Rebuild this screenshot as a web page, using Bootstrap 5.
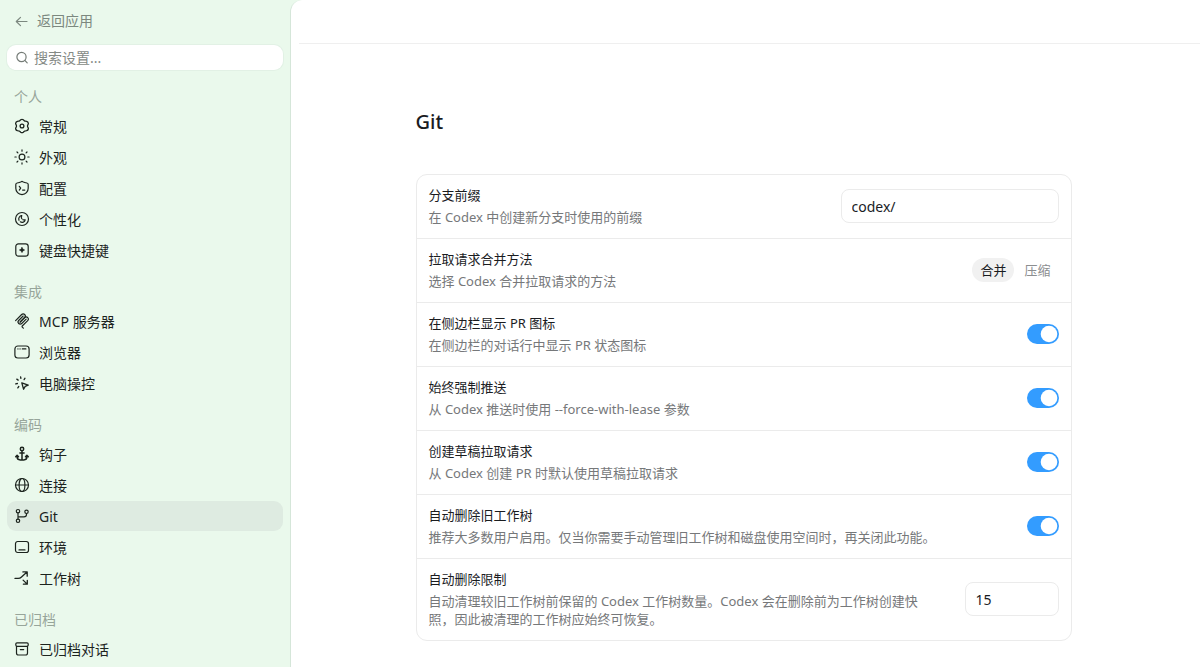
<!DOCTYPE html>
<html lang="zh-CN">
<head>
<meta charset="utf-8">
<meta name="viewport" content="width=device-width, initial-scale=1">
<title>设置 - Git</title>
<link href="https://cdn.jsdelivr.net/npm/bootstrap@5.3.0/dist/css/bootstrap.min.css" rel="stylesheet">
<style>
  :root {
    --ink: #1a1c1f;
    --muted: #76787a;
    --line: #ebebeb;
    --side: #eaf9ec;
  }
  body {
    background: var(--side);
    color: var(--ink);
    font-family: "Noto Sans", "Noto Sans CJK SC", sans-serif;
    font-size: 14px;
  }
  .sidebar { flex: 0 0 290px; padding: 9px 7px 0; }
  .back-link { color: #7c887f; line-height: 24px; padding: 0 8px; gap: 8px; }
  .search-box { background: #fff; border-radius: 9px; height: 25px; margin-top: 12px; padding: 0 8px; gap: 5px; color: #747b76; box-shadow: 0 0 0 1px #e2f1e5; }
  .search-box input { font-size: 14px; line-height: 20px; color: var(--ink); }
  .search-box input::placeholder { color: #858a86; opacity: 1; }
  .group-title { color: #97a59a; font-size: 14px; font-weight: 400; line-height: 22px; margin: 16px 0 3px; padding: 0 7px; }
  .side-link { color: #1c241e; height: 30px; padding: 0 7px; gap: 9px; border-radius: 9px; }
  .side-link:hover, .side-link.active { background: #deebe1; }
  .side-list { gap: 1px; }
  .side-list svg, .back-link svg, .search-box svg { flex: none; fill: none; stroke: currentColor; stroke-linecap: round; stroke-linejoin: round; }
  .panel { background: #fff; border-left: 1px solid #d5e6d9; border-top-left-radius: 12px; }
  .topbar { height: 44px; border-bottom: 1px solid #efefef; margin-left: 8px; }
  .content-col { max-width: 656px; padding: 66px 0 24px; }
  .page-title { font-size: 20px; line-height: 24px; font-weight: 500; margin-bottom: 40px; }
  .settings-card { border: 1px solid var(--line); border-radius: 11px; }
  .setting { padding: 11px 12px 12px; gap: 24px; }
  .setting + .setting { border-top: 1px solid var(--line); }
  .setting-name { display: block; font-size: 13px; line-height: 18px; font-weight: 400; }
  .setting-help { font-size: 13px; line-height: 18px; color: var(--muted); margin: 4px 0 0; font-variant-ligatures: none; }
  .help-narrow { max-width: 492px; }
  .field { height: 34px; border-color: var(--line); border-radius: 8px; font-size: 14px; color: var(--ink); padding: 0 10px; }
  .field-prefix { width: 218px; }
  .field-limit { width: 94px; }
  .seg { font-size: 13px; line-height: 24px; padding: 0 8px; border: 0; border-radius: 12px; background: none; color: #8c8e90; }
  .seg.active { background: #f1f1f1; color: var(--ink); }
  .seg-group { gap: 2px; }
  .form-switch .toggle, .form-switch .toggle:checked { --bs-form-switch-bg: url("data:image/svg+xml,%3Csvg xmlns='http://www.w3.org/2000/svg' viewBox='0 0 20 20'%3E%3Ccircle cx='10' cy='10' r='8.3' fill='white'/%3E%3C/svg%3E"); background-image: var(--bs-form-switch-bg); }
  .form-switch .toggle { width: 32px; height: 20px; margin: 0; border: 0; background-size: 20px 20px; }
  .form-switch .toggle:checked { background-color: #339cff; }
</style>
</head>
<body>
<div class="d-flex min-vh-100">
  <aside class="sidebar">
    <a href="#" class="back-link d-flex align-items-center text-decoration-none">
      <svg width="14" height="14" viewBox="0 0 14 14" stroke-width="1.2"><path d="M12 7.500H1.500M5.500 3.300 1.300 7.500l4.200 4.200"/></svg>返回应用
    </a>
    <label class="search-box d-flex align-items-center">
      <svg width="14" height="14" viewBox="0 0 14 14" stroke-width="1.2"><circle cx="6.500" cy="6" r="4.600"/><path d="m9.800 9.400 2.400 2.500"/></svg>
      <input type="search" class="flex-grow-1 border-0 bg-transparent p-0" placeholder="搜索设置..." aria-label="搜索设置">
    </label>

    <h2 class="group-title">个人</h2>
    <nav class="side-list d-flex flex-column">
      <a href="#" class="side-link d-flex align-items-center text-decoration-none">
        <svg width="16" height="16" viewBox="0 0 16 16" stroke-width="1.300"><path d="M6.700 1.800Q8 .9 9.300 1.800l1 .9q.5.500 1.200.5l1.100.1q1.400.4 1.700 1.700.2.700-.2 1.300-.6.900-.6 1.700t.6 1.700q.4.600.2 1.300-.3 1.300-1.700 1.700l-1.100.1q-.7 0-1.200.5l-1 .9q-1.300.9-2.600 0l-1-.9q-.5-.5-1.200-.5l-1.100-.1Q2 12.300 1.700 11q-.2-.7.200-1.300.6-.9.6-1.700t-.6-1.700Q1.500 5.700 1.700 5 2 3.700 3.400 3.300l1.100-.1q.7 0 1.200-.5z"/><circle cx="8" cy="8" r="1.900"/></svg>常规
      </a>
      <a href="#" class="side-link d-flex align-items-center text-decoration-none">
        <svg width="16" height="16" viewBox="0 0 16 16" stroke-width="1.200"><circle cx="8" cy="8" r="2.900"/><path d="M8 .9v1.300M8 13.800v1.300M.9 8h1.300M13.800 8h1.300M3 3l.9.9M12.100 12.100l.9.9M3 13l.9-.9M12.100 3.900l.9-.9"/></svg>外观
      </a>
      <a href="#" class="side-link d-flex align-items-center text-decoration-none">
        <svg width="16" height="16" viewBox="0 0 16 16" stroke-width="1.200"><path d="M7.200 1.700q.8-.5 1.600 0c1.200.7 2.600 1.100 4.100 1.300q1.300.2 1.300 1.400v3.800c0 3.400-2.600 6.200-6.200 6.500-3.600-.3-6.200-3.100-6.200-6.500V4.400Q1.800 3.200 3.100 3C4.600 2.800 6 2.400 7.200 1.700z"/><path d="m5.300 6.300 1.400 1.900-1.400 1.900M8.600 10.100h2.200"/></svg>配置
      </a>
      <a href="#" class="side-link d-flex align-items-center text-decoration-none">
        <svg width="16" height="16" viewBox="0 0 16 16" stroke-width="1.200"><circle cx="8" cy="8" r="6.500"/><path d="M7.800 4.700A3.300 3.300 0 0 0 5 9.300M6.300 10.800a3.200 3.200 0 0 0 4.900-2M7.800 4.700c-.7 1.200-.6 2.200 0 3M8.900 8.700c.7.300 1.500.3 2.300.1"/></svg>个性化
      </a>
      <a href="#" class="side-link d-flex align-items-center text-decoration-none">
        <svg width="16" height="16" viewBox="0 0 16 16" stroke-width="1.200"><rect x="1.800" y="1.800" width="12.400" height="12.400" rx="2.600"/><path fill="currentColor" stroke-width=".6" d="M8 5.400 8.900 7.100 10.600 8 8.900 8.900 8 10.600 7.100 8.900 5.400 8l1.700-.9z"/></svg>键盘快捷键
      </a>
    </nav>

    <h2 class="group-title">集成</h2>
    <nav class="side-list d-flex flex-column">
      <a href="#" class="side-link d-flex align-items-center text-decoration-none">
        <svg width="16" height="16" viewBox="0 0 180 180" stroke-width="13"><path d="M18 84.850 85.880 16.970c9.370-9.370 24.570-9.370 33.940 0s9.370 24.570 0 33.940L68.560 102.180"/><path d="m69.270 101.470 50.550-50.560c9.380-9.370 24.570-9.370 33.950 0l.35.360c9.370 9.370 9.370 24.570 0 33.940L92.720 146.600c-3.120 3.120-3.120 8.190 0 11.310l12.610 12.610"/><path d="m102.850 33.940-50.200 50.210c-9.370 9.370-9.370 24.560 0 33.940 9.370 9.370 24.570 9.370 33.940 0l50.200-50.210"/></svg>MCP 服务器
      </a>
      <a href="#" class="side-link d-flex align-items-center text-decoration-none">
        <svg width="16" height="16" viewBox="0 0 16 16" stroke-width="1.200"><rect x=".9" y="2" width="14.200" height="12" rx="3"/><path d="M3.900 4.900h.1M6 4.900h.1M8.300 4.900h3.600"/></svg>浏览器
      </a>
      <a href="#" class="side-link d-flex align-items-center text-decoration-none">
        <svg width="16" height="16" viewBox="0 0 16 16" stroke-width="1.300"><path d="m7.800 7.900 6.400 2.300-3 1.200-1.600 2.800zM6.600 1.800l.3 1.600M2.800 4.100l1.400 1M1.700 8.800l1.700-.3M3.800 12.900l1-1.400M11 3.200l-.9 1.400"/></svg>电脑操控
      </a>
    </nav>

    <h2 class="group-title">编码</h2>
    <nav class="side-list d-flex flex-column">
      <a href="#" class="side-link d-flex align-items-center text-decoration-none">
        <svg width="16" height="16" viewBox="0 0 16 16" stroke-width="1.500"><circle cx="8" cy="3" r="1.700"/><path d="M8 4.800v9M5.900 7.100h4.200M1.700 10.700l1.400-1.400 1.400 1.400M3.100 9.600v1.500c0 1.900 1.400 2.800 3.100 2.800h3.600c1.700 0 3.100-.9 3.100-2.800V9.600M11.500 10.700l1.400-1.400 1.400 1.400"/></svg>钩子
      </a>
      <a href="#" class="side-link d-flex align-items-center text-decoration-none">
        <svg width="16" height="16" viewBox="0 0 16 16" stroke-width="1.200"><circle cx="8" cy="8" r="6.500"/><ellipse cx="8" cy="8" rx="2.900" ry="6.500"/><path d="M1.500 8h13"/></svg>连接
      </a>
      <a href="#" class="side-link active d-flex align-items-center text-decoration-none" aria-current="page">
        <svg width="16" height="16" viewBox="0 0 16 16" stroke-width="1.200"><circle cx="4" cy="3.200" r="1.700"/><circle cx="12.500" cy="3.800" r="1.700"/><circle cx="4" cy="12.800" r="1.700"/><path d="M4 4.900v6.200M4 8.900h6c1.500 0 2.500-.9 2.500-2.400v-1"/></svg>Git
      </a>
      <a href="#" class="side-link d-flex align-items-center text-decoration-none">
        <svg width="16" height="16" viewBox="0 0 16 16" stroke-width="1.200"><rect x="1.500" y="2.500" width="13" height="11" rx="2.200"/><path d="M5 10.900h6"/></svg>环境
      </a>
      <a href="#" class="side-link d-flex align-items-center text-decoration-none">
        <svg width="16" height="16" viewBox="0 0 16 16" stroke-width="1.300"><path d="M1 8.400h3.200c1.500 0 2.400-.5 3.300-1.400L13 2M8.900 1.900h4.300v4.300M9.100 10.100l4.100 4M13.300 10.300v3.900H9.400"/></svg>工作树
      </a>
    </nav>

    <h2 class="group-title">已归档</h2>
    <nav class="side-list d-flex flex-column">
      <a href="#" class="side-link d-flex align-items-center text-decoration-none">
        <svg width="16" height="16" viewBox="0 0 16 16" stroke-width="1.200"><rect x="1.800" y="1.900" width="12.400" height="3.400" rx="1.200"/><path d="M2.500 5.300v6.600c0 1.300.8 2.100 2.100 2.100h6.800c1.300 0 2.100-.8 2.100-2.100V5.300M6.300 8.600h3.400"/></svg>已归档对话
      </a>
    </nav>
  </aside>

  <main class="panel flex-grow-1">
    <header class="topbar"></header>
    <div class="pe-1">
      <div class="content-col mx-auto">
        <h1 class="page-title">Git</h1>
        <form class="settings-card">
          <div class="setting d-flex align-items-center justify-content-between">
            <div>
              <label class="setting-name" for="prefix">分支前缀</label>
              <p class="setting-help">在 Codex 中创建新分支时使用的前缀</p>
            </div>
            <input type="text" id="prefix" class="form-control field field-prefix flex-shrink-0" value="codex/">
          </div>
          <div class="setting d-flex align-items-center justify-content-between">
            <div>
              <span class="setting-name" id="merge-label">拉取请求合并方法</span>
              <p class="setting-help">选择 Codex 合并拉取请求的方法</p>
            </div>
            <div class="seg-group d-flex flex-shrink-0" role="group" aria-labelledby="merge-label">
              <button type="button" class="seg active" aria-pressed="true">合并</button>
              <button type="button" class="seg" aria-pressed="false">压缩</button>
            </div>
          </div>
          <div class="setting d-flex align-items-center justify-content-between">
            <div>
              <label class="setting-name" for="pr-icon">在侧边栏显示 PR 图标</label>
              <p class="setting-help">在侧边栏的对话行中显示 PR 状态图标</p>
            </div>
            <div class="form-switch d-flex p-0"><input class="form-check-input toggle" type="checkbox" role="switch" id="pr-icon" checked></div>
          </div>
          <div class="setting d-flex align-items-center justify-content-between">
            <div>
              <label class="setting-name" for="force-push">始终强制推送</label>
              <p class="setting-help">从 Codex 推送时使用 --force-with-lease 参数</p>
            </div>
            <div class="form-switch d-flex p-0"><input class="form-check-input toggle" type="checkbox" role="switch" id="force-push" checked></div>
          </div>
          <div class="setting d-flex align-items-center justify-content-between">
            <div>
              <label class="setting-name" for="draft-pr">创建草稿拉取请求</label>
              <p class="setting-help">从 Codex 创建 PR 时默认使用草稿拉取请求</p>
            </div>
            <div class="form-switch d-flex p-0"><input class="form-check-input toggle" type="checkbox" role="switch" id="draft-pr" checked></div>
          </div>
          <div class="setting d-flex align-items-center justify-content-between">
            <div>
              <label class="setting-name" for="auto-delete">自动删除旧工作树</label>
              <p class="setting-help">推荐大多数用户启用。仅当你需要手动管理旧工作树和磁盘使用空间时，再关闭此功能。</p>
            </div>
            <div class="form-switch d-flex p-0"><input class="form-check-input toggle" type="checkbox" role="switch" id="auto-delete" checked></div>
          </div>
          <div class="setting d-flex align-items-center justify-content-between">
            <div>
              <label class="setting-name" for="limit">自动删除限制</label>
              <p class="setting-help help-narrow">自动清理较旧工作树前保留的 Codex 工作树数量。Codex 会在删除前为工作树创建快照，因此被清理的工作树应始终可恢复。</p>
            </div>
            <input type="text" inputmode="numeric" id="limit" class="form-control field field-limit flex-shrink-0" value="15">
          </div>
        </form>
      </div>
    </div>
  </main>
</div>
<script src="https://cdn.jsdelivr.net/npm/bootstrap@5.3.0/dist/js/bootstrap.bundle.min.js"></script>
</body>
</html>
